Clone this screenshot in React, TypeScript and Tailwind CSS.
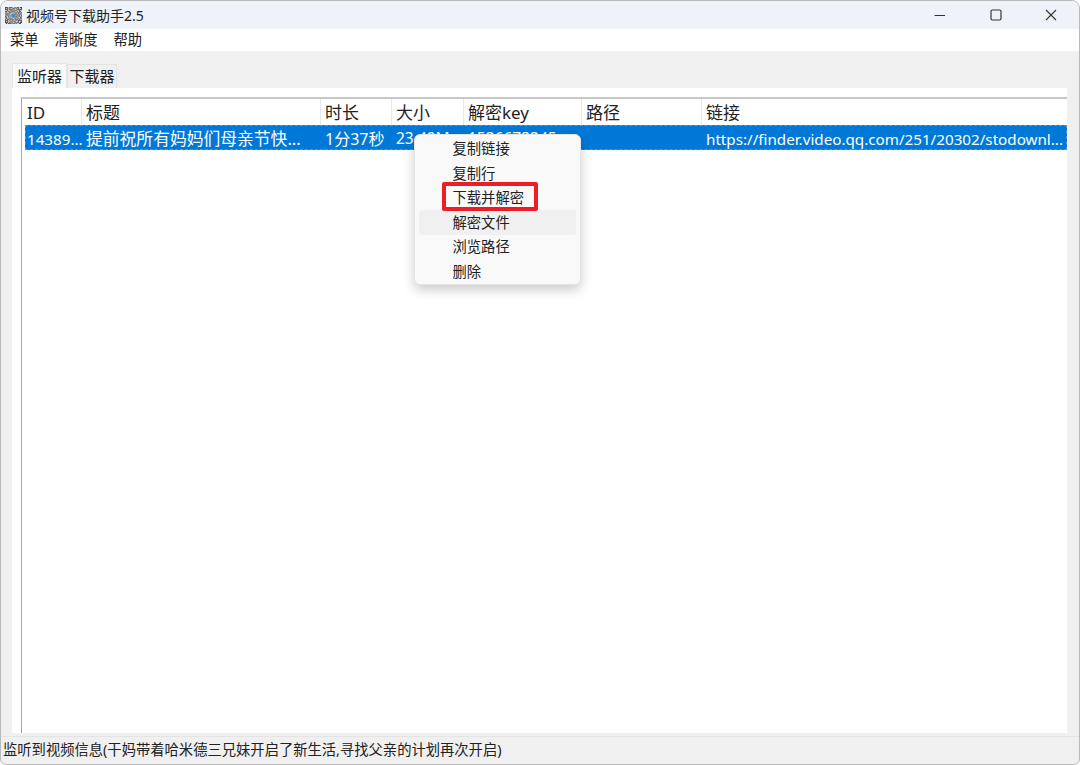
const font = "font-['Noto_Sans','Noto_Sans_CJK_SC',sans-serif]";

const columns = [
  { label: "ID", width: "w-[60px]", value: "14389...", pad: "pl-[1px]", text: "text-[15.2px]" },
  { label: "标题", width: "w-[239px]", value: "提前祝所有妈妈们母亲节快...", pad: "pl-[4px]", text: "text-[16.8px]" },
  { label: "时长", width: "w-[71px]", value: "1分37秒", pad: "pl-[4px]", text: "text-[16px]" },
  { label: "大小", width: "w-[72px]", value: "23.49M", pad: "pl-[4px]", text: "text-[15.5px]" },
  { label: "解密key", width: "w-[118px]", value: "1536673345", pad: "pl-[4px]", text: "text-[15.5px]" },
  { label: "路径", width: "w-[120px]", value: "", pad: "pl-[4px]", text: "text-[15.5px]" },
  { label: "链接", width: "flex-1", value: "https://finder.video.qq.com/251/20302/stodownl...", pad: "pl-[4px]", text: "text-[15.2px]" },
];

const menuItems = ["复制链接", "复制行", "下载并解密", "解密文件", "浏览路径", "删除"];

const qrCells = [
  "1110111001011011", "1010100110101001", "1110111010011111", "0010010101100100",
  "1101101110010110", "0100110001101101", "1011000000101010", "0110100000010101",
  "1001010000101101", "1101000000110010", "0100110001001011", "1011011101110100",
  "1110100100101111", "1010011011001001", "1110101001011011", "0101110110100110",
];

function AppIcon() {
  return (
    <svg width="17" height="17" viewBox="0 0 16 16" className="shrink-0">
      <rect width="16" height="16" fill="#d6d6d6" />
      {qrCells.map((row, y) =>
        row.split("").map((c, x) =>
          c === "1" ? <rect key={`${x}-${y}`} x={x} y={y} width="1" height="1" fill="#4a4a4a" /> : null
        )
      )}
      <rect x="6" y="6" width="4" height="4" rx="1" fill="#3f8fc4" />
    </svg>
  );
}

function TitleBar() {
  return (
    <div className="flex h-[28px] shrink-0 items-center bg-[#eef2f9] pl-[4px]">
      <AppIcon />
      <span className="ml-[4px] text-[14px] text-[#222]">视频号下载助手2.5</span>
      <div className="ml-auto flex items-center">
        <svg width="12" height="12" viewBox="0 0 12 12" className="mr-[44px]">
          <path d="M0.5 6.5H11" stroke="#333" strokeWidth="1" />
        </svg>
        <svg width="12" height="12" viewBox="0 0 12 12" className="mr-[43px]">
          <rect x="1" y="1" width="10" height="10" rx="1.5" fill="none" stroke="#333" strokeWidth="1.2" />
        </svg>
        <svg width="12" height="12" viewBox="0 0 12 12" className="mr-[22px]">
          <path d="M1 1L11 11M11 1L1 11" stroke="#333" strokeWidth="1.1" />
        </svg>
      </div>
    </div>
  );
}

function MenuBar() {
  return (
    <div className="flex h-[22px] shrink-0 items-center gap-[16px] bg-white pl-[9px] text-[14.3px] text-[#222]">
      <span>菜单</span>
      <span>清晰度</span>
      <span>帮助</span>
    </div>
  );
}

function ContextMenu() {
  return (
    <div className="absolute left-[413px] top-[133px] h-[151px] w-[167px] rounded-[6px] border border-[#e4e4e4] bg-[#f9f9f9] px-[4px] pt-[1.5px] shadow-[0_5px_12px_rgba(0,0,0,0.2)]">
      {menuItems.map((item, i) => (
        <div
          key={item}
          className={`flex h-[24.5px] items-center rounded-[3px] pl-[33.5px] text-[14.3px] text-[#222] ${i === 3 ? "bg-[#f0f0f0]" : ""}`}
        >
          {item}
        </div>
      ))}
    </div>
  );
}

export default function App() {
  return (
    <div className={`relative flex h-[765px] w-[1080px] flex-col overflow-hidden rounded-t-[8px] rounded-b-[6px] border border-[#b9b9b9] bg-[#f0f0f0] ${font}`}>
      <TitleBar />
      <MenuBar />
      <div className="flex min-h-0 flex-1 flex-col pl-[11px] pr-[12px] pt-[12px]">
        <div className="flex h-[25px] shrink-0 items-end text-[15px] text-[#222]">
          <div className="flex h-[25px] w-[55px] items-center justify-center border border-b-0 border-[#e6e6e6] bg-[#f9f9f9]">监听器</div>
          <div className="flex h-[24px] w-[50px] items-center justify-center border border-b-0 border-[#e2e2e2] bg-[#f0f0f0]">下载器</div>
        </div>
        <div className="flex min-h-0 flex-1 flex-col bg-white pl-[9px] pt-[9px]">
          <div className="flex min-h-0 flex-1 flex-col border-l border-t-2 border-[#a6a6a6] border-t-[#c8c8c8]">
            <div className="flex h-[26px] shrink-0 text-[17px] text-[#222]">
              {columns.map((col, i) => (
                <div key={col.label} className={`flex items-center border-r border-[#e8e8e8] pt-[2px] last:border-r-0 ${i === 0 ? "pl-[5px]" : "pl-[4px]"} ${col.width}`}>
                  {col.label}
                </div>
              ))}
            </div>
            <div className="ml-[3px] flex h-[25px] shrink-0 border border-dashed border-[#5a94c8] bg-[#0078d7] text-white">
              {columns.map((col, i) => (
                <div
                  key={col.label}
                  className={`flex items-center overflow-hidden whitespace-nowrap pt-[3px] ${col.pad} ${col.text} ${i === 0 ? "w-[56px]" : col.width}`}
                >
                  {col.value}
                </div>
              ))}
            </div>
          </div>
        </div>
      </div>
      <div className="mt-[3px] flex h-[28px] shrink-0 items-center border-t border-[#e4e4e4] pb-[2px] pl-[2px] text-[14.3px] text-[#222]">
        监听到视频信息(干妈带着哈米德三兄妹开启了新生活,寻找父亲的计划再次开启)
      </div>
      <ContextMenu />
      <div className="absolute left-[441px] top-[181px] h-[29px] w-[96px] rounded-[2px] border-[4px] border-[#ee1c25]" />
    </div>
  );
}
